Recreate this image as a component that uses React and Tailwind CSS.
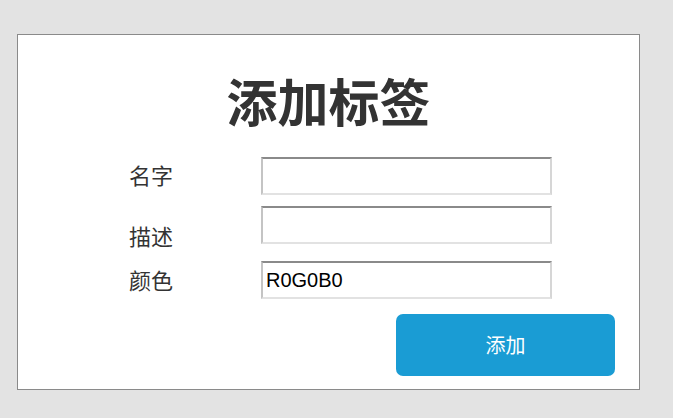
import React from "react";

const cjk = { fontFamily: '"Noto Sans CJK SC", "Noto Sans", sans-serif' };

const Field = ({ label, value, className = "", labelClass = "" }) => (
  <div className={`flex h-[38px] pl-[111px] ${className}`}>
    <div className={`w-[132px] shrink-0 text-[22px] text-[#333] leading-none whitespace-nowrap ${labelClass}`} style={cjk}>
      {label}
    </div>
    <input
      readOnly
      value={value}
      className="h-[38px] w-[291px] border-2 border-t-[#8a8a8a] border-l-[#c4c4c4] border-r-[#d6d6d6] border-b-[#e2e2e2] bg-white px-[3px] text-[20px] text-black outline-none"
      style={{ fontFamily: '"Liberation Sans", Arial, sans-serif' }}
    />
  </div>
);

export default function App() {
  return (
    <div className="min-h-screen w-[673px] h-[418px] bg-[#e3e3e3] pt-[34px] pl-[17px] overflow-hidden">
      <div className="w-[623px] h-[356px] border border-[#8a8a8a] bg-white flex flex-col">
        <h1 className="mt-[36px] text-center text-[51px] font-bold leading-[58px] text-[#333]" style={cjk}>
          添加标签
        </h1>
        <div className="mt-[28px]">
          <Field label="名字" value="" labelClass="pt-[6px]" />
          <Field label="描述" value="" className="mt-[11px]" labelClass="pt-[18px]" />
          <Field label="颜色" value="R0G0B0" className="mt-[17px]" labelClass="pt-[7px]" />
        </div>
        <div className="mt-[15px] flex justify-end pr-[24px]">
          <button
            className="w-[219px] h-[62px] rounded-[7px] bg-[#1a9cd4] text-white text-[20px]"
            style={cjk}
          >
            添加
          </button>
        </div>
      </div>
    </div>
  );
}
